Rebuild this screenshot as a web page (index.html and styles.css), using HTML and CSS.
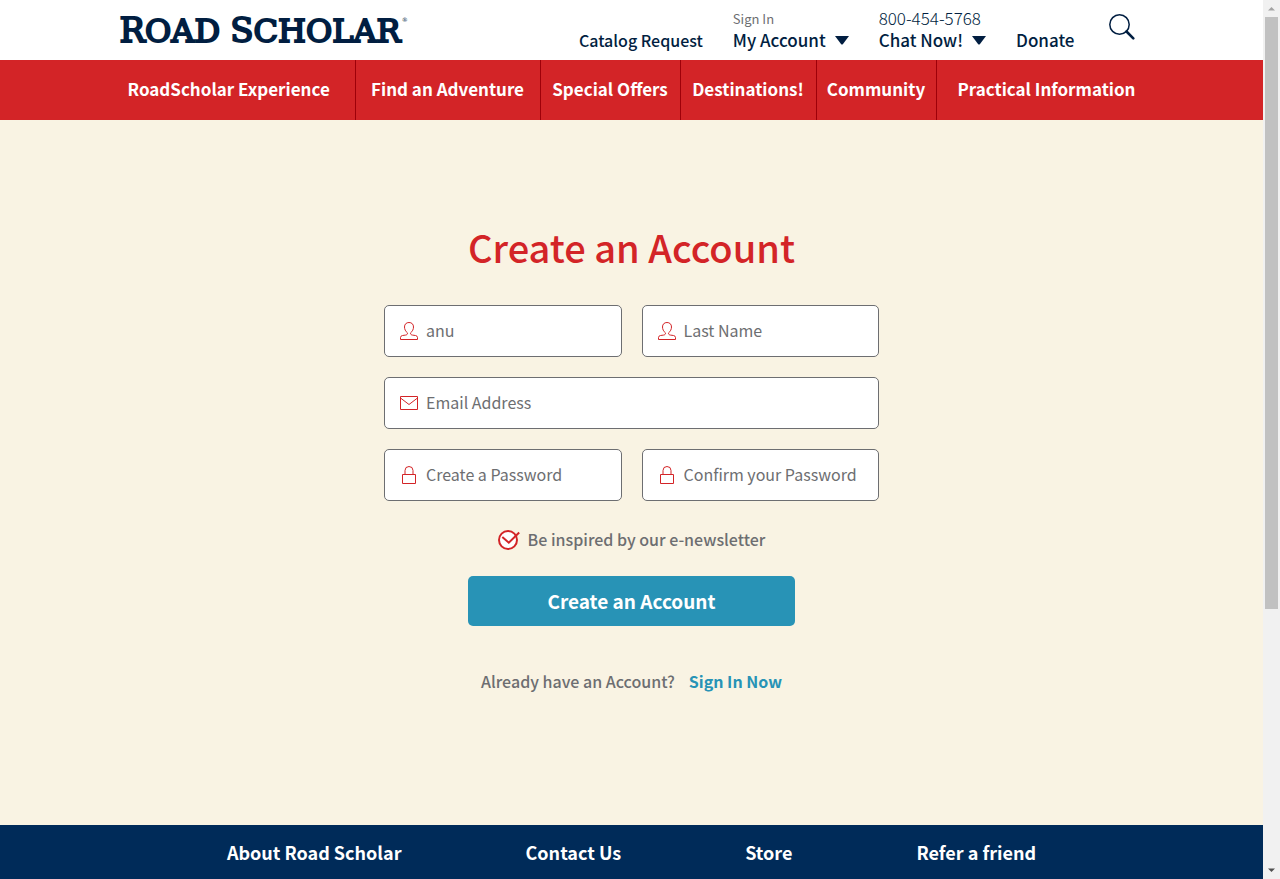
FILE: index.html
```html
<!DOCTYPE html>
<html lang="en">
<head>
<meta charset="utf-8">
<title>Create an Account | Road Scholar</title>
<meta name="viewport" content="width=device-width, initial-scale=1">
<link rel="stylesheet" href="styles.css">
</head>
<body>
<div class="page">
  <header class="header">
    <div class="container header-row">
      <a class="logo" href="#"><span class="logo-name"><span class="logo-cap">R</span>OAD <span class="logo-cap">S</span>CHOLAR</span><span class="logo-mark">®</span></a>
      <div class="tools">
        <a class="tool tool-small" href="#">Catalog Request</a>
        <div class="tool-stack">
          <a class="tool-note" href="#">Sign In</a>
          <button class="tool" type="button">My Account <svg class="caret" viewBox="0 0 14 9" aria-hidden="true"><path d="M0 0H14L8 8Q7 9 6 8Z"/></svg></button>
        </div>
        <div class="tool-stack">
          <a class="tool-phone" href="#">800-454-5768</a>
          <button class="tool" type="button">Chat Now! <svg class="caret" viewBox="0 0 14 9" aria-hidden="true"><path d="M0 0H14L8 8Q7 9 6 8Z"/></svg></button>
        </div>
        <a class="tool" href="#">Donate</a>
        <button class="search" type="button" aria-label="Search">
          <svg viewBox="0 0 26 26" aria-hidden="true"><circle cx="10.500" cy="10.500" r="9.700" fill="none" stroke="currentColor" stroke-width="1.500"/><path d="M17.500 17.500L24.300 24.300" stroke="currentColor" stroke-width="2.600" stroke-linecap="round"/></svg>
        </button>
      </div>
    </div>
  </header>
  <nav class="nav" aria-label="Main">
    <div class="container nav-row">
      <a href="#">RoadScholar Experience</a>
      <a href="#">Find an Adventure</a>
      <a href="#">Special Offers</a>
      <a href="#">Destinations!</a>
      <a href="#">Community</a>
      <a href="#">Practical Information</a>
    </div>
  </nav>
  <main class="main">
    <form class="form" action="#">
      <h1 class="title">Create an Account</h1>
      <div class="fields">
        <label class="field">
          <svg class="icon" viewBox="0 0 18 18" aria-hidden="true"><path d="M7.500 10.900C5.500 9.500 4.500 7 4.500 5C4.500 2.200 6.300 0.500 9 0.500S13.500 2.200 13.500 5C13.500 7 12.500 9.500 10.500 10.900C10.400 12.200 11 12.800 12.500 13.100L15.500 13.500Q17.500 13.900 17.500 15.500V17.500H0.500V15.500Q0.500 13.900 2.500 13.500L5.500 13.100C7 12.800 7.600 12.200 7.500 10.900Z"/></svg>
          <input type="text" aria-label="First Name" placeholder="First Name" value="anu">
        </label>
        <label class="field">
          <svg class="icon" viewBox="0 0 18 18" aria-hidden="true"><path d="M7.500 10.900C5.500 9.500 4.500 7 4.500 5C4.500 2.200 6.300 0.500 9 0.500S13.500 2.200 13.500 5C13.500 7 12.500 9.500 10.500 10.900C10.400 12.200 11 12.800 12.500 13.100L15.500 13.500Q17.500 13.900 17.500 15.500V17.500H0.500V15.500Q0.500 13.900 2.500 13.500L5.500 13.100C7 12.800 7.600 12.200 7.500 10.900Z"/></svg>
          <input type="text" aria-label="Last Name" placeholder="Last Name">
        </label>
        <label class="field field-wide">
          <svg class="icon" viewBox="0 0 18 18" aria-hidden="true"><path d="M0.500 2.500H17.500V15.500H0.500ZM0.500 4L9 10.500L17.500 4"/></svg>
          <input type="email" aria-label="Email Address" placeholder="Email Address">
        </label>
        <label class="field">
          <svg class="icon" viewBox="0 0 18 18" aria-hidden="true"><path d="M2.500 8.500H15.500V17.500H2.500ZM5 8.500V4.500Q5 0.500 9 0.500T13 4.500V8.500"/></svg>
          <input type="password" aria-label="Create a Password" placeholder="Create a Password">
        </label>
        <label class="field">
          <svg class="icon" viewBox="0 0 18 18" aria-hidden="true"><path d="M2.500 8.500H15.500V17.500H2.500ZM5 8.500V4.500Q5 0.500 9 0.500T13 4.500V8.500"/></svg>
          <input type="password" aria-label="Confirm your Password" placeholder="Confirm your Password">
        </label>
      </div>
      <label class="newsletter">
        <span class="check">
          <input type="checkbox" checked>
          <svg viewBox="0 0 22 20" aria-hidden="true"><circle cx="10" cy="10" r="9" fill="#fff"/><path d="M4.300 7L10.800 12.700L21.200 2.500" /></svg>
        </span>
        Be inspired by our e-newsletter
      </label>
      <button class="submit" type="submit">Create an Account</button>
      <p class="signin">Already have an Account? <a href="#">Sign In Now</a></p>
    </form>
  </main>
  <footer class="footer">
    <a href="#">About Road Scholar</a>
    <a href="#">Contact Us</a>
    <a href="#">Store</a>
    <a href="#">Refer a friend</a>
  </footer>
</div>
<div class="scrollbar" aria-hidden="true">
  <svg class="arrow" viewBox="0 0 17 17"><path d="M5 10.500L8.500 7L12 10.500Z" fill="#a3a3a3"/></svg>
  <div class="track"><div class="thumb"></div></div>
  <svg class="arrow" viewBox="0 0 17 17"><path d="M5 6.500L8.500 10L12 6.500Z" fill="#505050"/></svg>
</div>
</body>
</html>
```
FILE: styles.css
```css
* { box-sizing: border-box; }

body {
  display: flex;
  min-height: 100vh;
  margin: 0;
  background: #f9f3e3;
  color: #011e41;
  font-family: "Noto Sans CJK JP", "Noto Sans CJK SC", "Noto Sans", sans-serif;
  font-size: 16px;
  line-height: 24px;
}

a { color: inherit; text-decoration: none; }

button, input {
  margin: 0;
  padding: 0;
  border: 0;
  background: none;
  color: inherit;
  font: inherit;
}

button { cursor: pointer; }

svg { display: block; }

.page {
  display: flex;
  flex: 1;
  flex-direction: column;
  min-width: 0;
}

.container {
  width: 100%;
  max-width: 1024px;
  margin: 0 auto;
}

/* Header */
.header { background: #fff; }

.header-row {
  display: flex;
  justify-content: space-between;
  min-height: 60px;
}

.logo {
  display: flex;
  align-items: flex-start;
  gap: 1px;
  padding-top: 12px;
  font-family: "DejaVu Serif", serif;
  white-space: nowrap;
}

.logo-name {
  font-size: 32px;
  line-height: 36px;
  -webkit-text-stroke: 2px #011e41;
}

.logo-cap { font-size: 34px; }

.logo-mark { font-size: 6px; line-height: 15px; }

.tools {
  display: flex;
  align-items: flex-end;
  gap: 30px;
  padding: 0 9px 9px 0;
  white-space: nowrap;
}

.tool-stack {
  display: flex;
  flex-direction: column;
  align-items: flex-start;
}

.tool {
  display: flex;
  align-items: center;
  gap: 9px;
  font-size: 17px;
  font-weight: 500;
  line-height: 22px;
}

.tool-small { font-size: 16px; }

.tool-note { color: #6d6e71; font-size: 13px; line-height: 20px; }

.tool-phone { font-size: 17px; font-weight: 300; line-height: 22px; }

.caret { width: 14px; height: 9px; fill: #011e41; }

.search { align-self: flex-start; padding: 14px 0 0 4px; }

.search svg { width: 26px; height: 26px; }

/* Navigation */
.nav {
  background: #d32427;
  color: #fff;
  font-size: 17px;
  font-weight: 700;
}

.nav-row {
  display: grid;
  grid-template-columns: 236fr 185fr 140fr 136fr 120fr 207fr;
}

.nav-row a {
  padding: 17px 0 19px;
  border-right: 1px solid #9e0009;
  text-align: center;
  white-space: nowrap;
}

.nav-row a:first-child { padding-left: 8px; text-align: left; }

.nav-row a:last-child { border-right: 0; padding-right: 8px; text-align: right; }

/* Account form */
.main {
  display: flex;
  justify-content: center;
  padding: 101px 16px 132px;
}

.form {
  display: flex;
  flex-direction: column;
  align-items: center;
  width: 100%;
  max-width: 495px;
  color: #6d6e71;
}

.title {
  margin: 0 0 32px;
  color: #d32427;
  font-size: 38px;
  font-weight: 500;
  line-height: 52px;
}

.fields {
  display: grid;
  grid-template-columns: 1fr 1fr;
  gap: 20px;
  width: 100%;
}

.field {
  display: flex;
  align-items: center;
  gap: 8px;
  height: 52px;
  padding: 0 15px;
  border: 1px solid #6d6e71;
  border-radius: 5px;
  background: #fff;
}

.field-wide { grid-column: 1 / -1; }

.field input { flex: 1; min-width: 0; padding-bottom: 2px; outline: 0; }

.field input::placeholder { color: #6d6e71; opacity: 1; }

.icon {
  flex: none;
  width: 18px;
  height: 18px;
  fill: none;
  stroke: #d32427;
}

.newsletter {
  display: flex;
  align-items: center;
  gap: 8px;
  margin-top: 26px;
  font-weight: 500;
}

.check { position: relative; width: 22px; height: 20px; margin-top: 2px; }

.check input {
  position: absolute;
  inset: 0;
  opacity: 0;
}

.check svg {
  width: 22px;
  height: 20px;
  fill: none;
  stroke: #d32427;
  stroke-width: 2;
}

.submit {
  width: 66%;
  margin-top: 25px;
  padding: 12px;
  border-radius: 5px;
  background: #2893b6;
  color: #fff;
  font-size: 19px;
  font-weight: 700;
  line-height: 26px;
}

.signin {
  display: flex;
  gap: 14px;
  margin: 43px 0 0;
  font-weight: 500;
}

.signin a { color: #2893b6; font-weight: 700; }

/* Footer */
.footer {
  display: flex;
  flex: 1;
  justify-content: center;
  gap: 124px;
  padding: 15px 16px;
  background: #002b59;
  color: #fff;
  font-size: 18px;
  font-weight: 700;
}

/* Scrollbar */
.scrollbar {
  position: sticky;
  top: 0;
  display: flex;
  flex-direction: column;
  width: 17px;
  height: 100vh;
  background: #f1f1f1;
}

.arrow { width: 17px; height: 17px; }

.track { flex: 1; padding: 0 2px; }

.thumb { height: 70%; background: #c1c1c1; }
```
